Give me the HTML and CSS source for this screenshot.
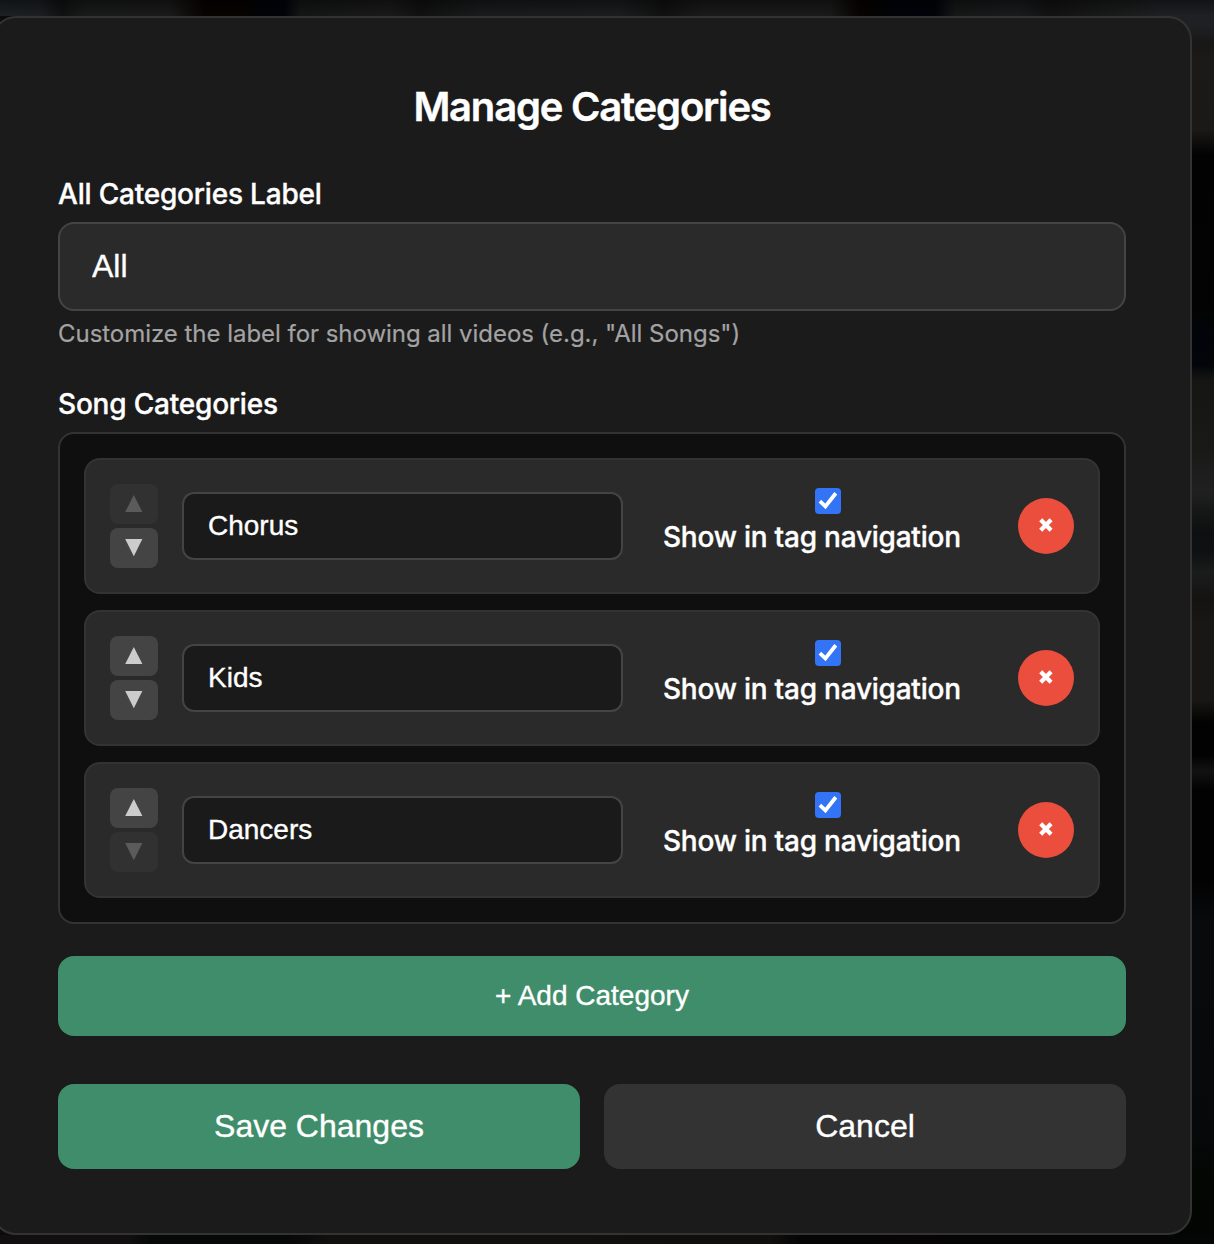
FILE: index.html
```html
<!DOCTYPE html>
<html lang="en">
<head>
<meta charset="utf-8">
<title>Manage Categories</title>
<link rel="stylesheet" href="styles.css">
</head>
<body>
<svg class="defs" width="0" height="0" aria-hidden="true">
  <symbol id="up" viewBox="0 0 48 40"><path d="M23.8 11 32.4 28H15.2z"/></symbol>
  <symbol id="down" viewBox="0 0 48 40"><path d="M15.2 11H32.4L23.8 28.3z"/></symbol>
  <symbol id="check" viewBox="0 0 26 26"><path d="M4.9 13.2 10.4 18.4 20.8 5.2" fill="none" stroke="#fff" stroke-width="3.8"/></symbol>
  <symbol id="cross" viewBox="0 0 56 56"><path d="M22.7 21.8 33.1 32.2M33.1 21.8 22.7 32.2" fill="none" stroke="#fff" stroke-width="4.3"/></symbol>
</svg>
<main class="modal">
  <h2 class="title">Manage Categories</h2>
  <label class="label label-all" for="all">All Categories Label</label>
  <input class="field" id="all" value="All">
  <p class="hint">Customize the label for showing all videos (e.g., "All Songs")</p>
  <div class="label label-song">Song Categories</div>
  <section class="list">
    <div class="item">
      <div class="arrows">
        <button class="arrow" disabled><svg><use href="#up"/></svg></button>
        <button class="arrow"><svg><use href="#down"/></svg></button>
      </div>
      <input class="name" value="Chorus">
      <div class="nav"><span class="box"><svg><use href="#check"/></svg></span><span class="nav-text">Show in tag navigation</span></div>
      <button class="delete"><svg><use href="#cross"/></svg></button>
    </div>
    <div class="item">
      <div class="arrows">
        <button class="arrow"><svg><use href="#up"/></svg></button>
        <button class="arrow"><svg><use href="#down"/></svg></button>
      </div>
      <input class="name" value="Kids">
      <div class="nav"><span class="box"><svg><use href="#check"/></svg></span><span class="nav-text">Show in tag navigation</span></div>
      <button class="delete"><svg><use href="#cross"/></svg></button>
    </div>
    <div class="item">
      <div class="arrows">
        <button class="arrow"><svg><use href="#up"/></svg></button>
        <button class="arrow" disabled><svg><use href="#down"/></svg></button>
      </div>
      <input class="name" value="Dancers">
      <div class="nav"><span class="box"><svg><use href="#check"/></svg></span><span class="nav-text">Show in tag navigation</span></div>
      <button class="delete"><svg><use href="#cross"/></svg></button>
    </div>
  </section>
  <button class="btn add">+ Add Category</button>
  <div class="actions">
    <button class="btn save">Save Changes</button>
    <button class="btn cancel">Cancel</button>
  </div>
</main>
</body>
</html>
```

FILE: styles.css
```css
* { box-sizing: border-box; }
html { background: #000; }
body {
  margin: 0;
  height: 1244px;
  overflow: hidden;
  padding-top: 16px;
  font-family: Inter, "Liberation Sans", sans-serif;
  color: #fff;
  background:
    linear-gradient(180deg, rgba(0, 0, 0, 0.4), rgba(0, 0, 0, 0)) 0 0 / 100% 16px no-repeat,
    linear-gradient(90deg, #1c2124 0, #1b1f21 40px, #101212 62px, #191b1a 85px, #191a19 170px, #060300 205px, #060300 245px, #010309 260px, #010309 285px, #141615 300px, #191a19 390px, #111 420px, #191b1c 480px, #1b1d1e 620px, #111 665px, #191a19 700px, #191a19 830px, #060300 860px, #010309 900px, #010309 935px, #151817 955px, #191b1d 1020px, #121212 1050px, #191b1a 1110px, #1e2023 1160px, #1e2023 100%) 0 0 / 100% 16px no-repeat,
    linear-gradient(90deg, #110f0f 0, #110f0f 130px, #070808 150px, #070808 290px, #12100f 330px, #110f0e 770px, #050505 800px, #070505 900px, #040505 100%) 0 1235px / 100% 9px no-repeat,
    linear-gradient(180deg, #1e2023 0, #1e2023 26px, #171716 42px, #1b1a18 60px, #1a1917 130px, #020202 155px, #030303 310px, #01050a 335px, #020509 365px, #151513 380px, #191a18 450px, #202020 492px, #171918 508px, #0d1010 532px, #0e1111 552px, #1a1c1c 572px, #141312 598px, #191714 625px, #191714 700px, #020202 722px, #020202 755px, #121212 771px, #020202 790px, #020202 880px, #080a0c 923px, #060809 1140px, #040603 1180px, #030502 100%) 1168px 0 / 46px 1244px no-repeat,
    #0c0c0c;
}
.defs { position: absolute; }
button, input { font-family: "Liberation Sans", Arial, sans-serif; color: #fff; margin: 0; -webkit-text-stroke: 0.35px currentColor; }
button { border: 0; padding: 0; }
.modal {
  width: 1200px;
  height: 1219px;
  margin-left: -8px;
  padding: 62px 64px 64px;
  background: #1b1b1b;
  border: 2px solid #333;
  border-radius: 24px;
  display: flex;
  flex-direction: column;
}
.title {
  margin: 0;
  height: 54px;
  line-height: 54px;
  font-size: 40px;
  font-weight: 600;
  text-align: center;
  letter-spacing: -1.2px;
  -webkit-text-stroke: 0.4px currentColor;
}
.label { font-size: 28px; font-weight: 500; line-height: 36px; height: 36px; letter-spacing: -0.2px; -webkit-text-stroke: 0.35px currentColor; }
.label-all { margin-top: 42px; }
.label-song { margin-top: 36px; }
.field {
  margin-top: 10px;
  height: 89px;
  flex: none;
  padding: 0 32px 1px;
  font-size: 32px;
  background: #2a2a2a;
  border: 2px solid #444;
  border-radius: 16px;
}
.hint { margin: 7px 0 0; height: 32px; line-height: 32px; font-size: 24px; letter-spacing: -0.035px; color: #a3a3a3; white-space: nowrap; -webkit-text-stroke: 0.2px currentColor; }
.list {
  margin-top: 10px;
  padding: 24px;
  background: #0f0f0f;
  border: 2px solid #333;
  border-radius: 16px;
  display: flex;
  flex-direction: column;
  gap: 16px;
}
.item {
  height: 136px;
  padding: 0 24px;
  background: #2a2a2a;
  border: 2px solid #333;
  border-radius: 16px;
  display: flex;
  align-items: center;
}
.arrows { display: flex; flex-direction: column; gap: 4px; }
.arrow { width: 48px; height: 40px; background: #444; border-radius: 8px; color: #ccc; }
.arrow:disabled { opacity: 0.3; }
.arrow svg { display: block; width: 48px; height: 40px; fill: currentColor; }
.name {
  width: 441px;
  height: 68px;
  margin-left: 24px;
  padding: 0 24px;
  font-size: 28px;
  background: #1a1a1a;
  border: 2px solid #444;
  border-radius: 12px;
}
.nav { width: 298px; height: 76px; margin-left: 40px; display: flex; flex-direction: column; }
.box { width: 26px; height: 26px; margin-left: 152px; background: #3374f6; border-radius: 4px; }
.box svg { display: block; width: 26px; height: 26px; }
.nav-text { margin-top: 5px; font-size: 28px; font-weight: 500; line-height: 36px; letter-spacing: -0.23px; white-space: nowrap; -webkit-text-stroke: 0.35px currentColor; }
.delete { width: 56px; height: 56px; margin-left: auto; border-radius: 50%; background: #eb4e3d; }
.delete svg { display: block; width: 56px; height: 56px; }
.btn { border-radius: 16px; background: #3f8d6a; }
.add { margin-top: 32px; height: 80px; flex: none; font-size: 28px; }
.actions { margin-top: 48px; display: flex; gap: 24px; }
.save, .cancel { flex: 1; height: 85px; font-size: 32px; }
.cancel { background: #333; }
```
